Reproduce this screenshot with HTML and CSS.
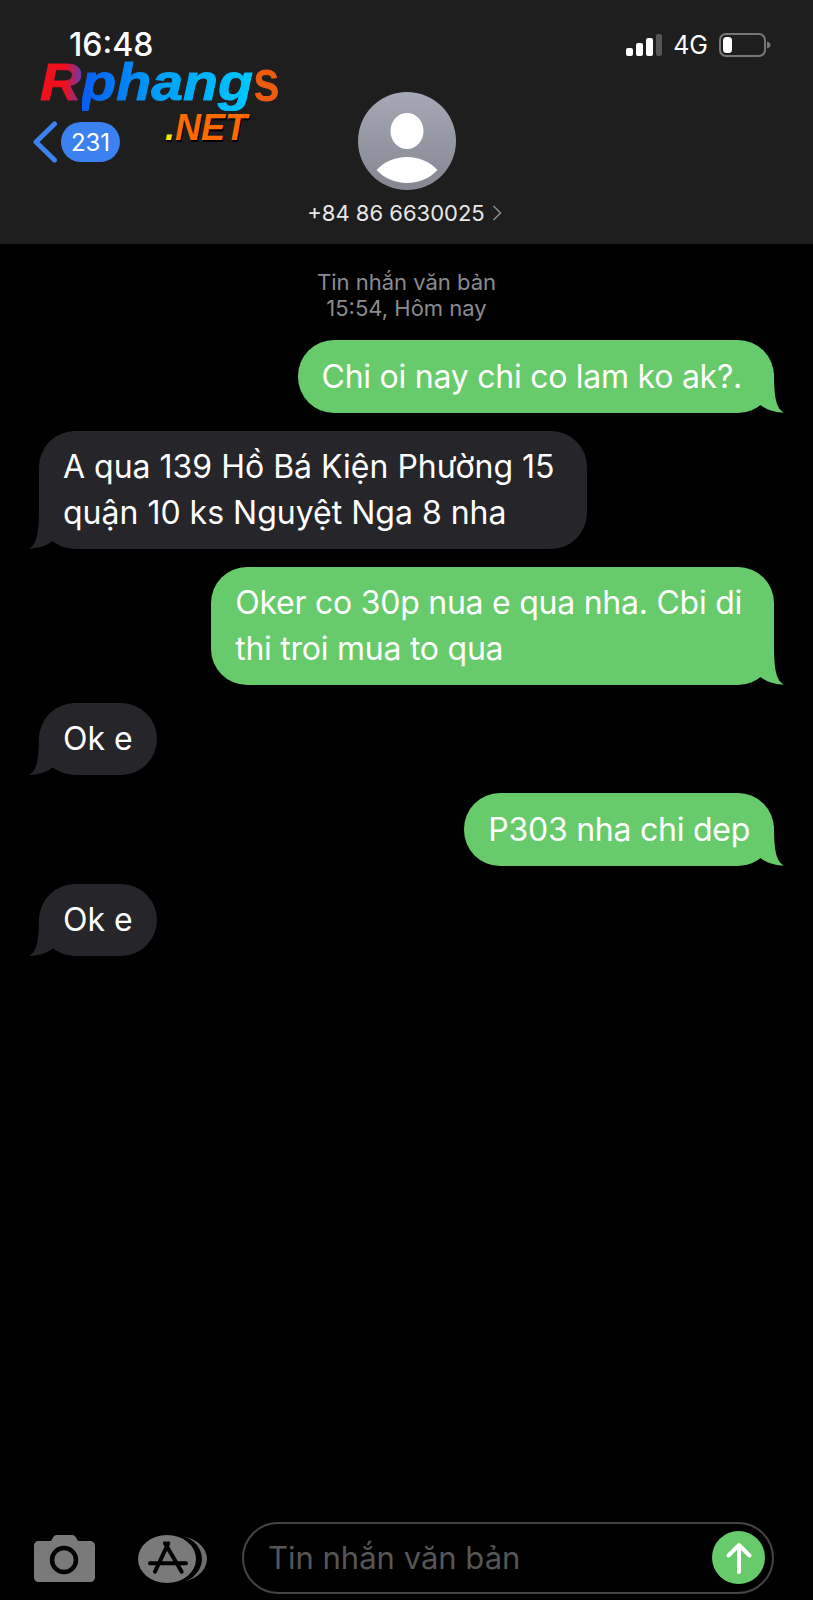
FILE: index.html
```html
<!DOCTYPE html>
<html>
<head>
    <meta charset="utf-8">
    <title>Tin nhắn</title>
    <link rel="stylesheet" href="styles.css">
</head>
<body>
<div class="phone">
    <div class="header">
        <div class="status">
            <span class="time">16:48</span>
            <div class="status-right">
                <svg class="signal" width="36" height="22" viewBox="0 0 36 22">
                    <rect x="0" y="14" width="7" height="8" rx="2" fill="#fff"/>
                    <rect x="10" y="9" width="7" height="13" rx="2" fill="#fff"/>
                    <rect x="20" y="4" width="7" height="18" rx="2" fill="#fff"/>
                    <rect x="30" y="0" width="6" height="22" rx="2" fill="#555"/>
                </svg>
                <span class="net">4G</span>
                <svg class="battery" width="52" height="24" viewBox="0 0 52 24">
                    <rect x="1" y="1" width="45" height="22" rx="6" fill="none" stroke="#777" stroke-width="2"/>
                    <rect x="4" y="4" width="9" height="16" rx="3.500" fill="#fff"/>
                    <path d="M48 8.500c2.500 .8 3.500 2 3.500 3.500s-1 2.700-3.500 3.500z" fill="#777"/>
                </svg>
            </div>
        </div>
        <div class="nav">
            <div class="back">
                <svg width="26" height="42" viewBox="0 0 26 42">
                    <path d="M21.500 3 L3 21 L21.500 39" fill="none" stroke="#3b82f0" stroke-width="5" stroke-linecap="round" stroke-linejoin="round"/>
                </svg>
                <span class="badge">231</span>
            </div>
            <div class="contact">
                <svg class="avatar" width="98" height="98" viewBox="0 0 98 98">
                    <defs>
                        <linearGradient id="avatarbg" x1="0" y1="0" x2="0" y2="1">
                            <stop offset="0" stop-color="#a6a9b5"/>
                            <stop offset="1" stop-color="#848791"/>
                        </linearGradient>
                    </defs>
                    <circle cx="49" cy="49" r="49" fill="url(#avatarbg)"/>
                    <ellipse cx="49" cy="39" rx="16.500" ry="18" fill="#fff"/>
                    <path d="M18.500 78C26 70 37 65 49 65C61 65 72 70 79.500 78C72 86 61 91 49 91C37 91 26 86 18.500 78Z" fill="#fff"/>
                </svg>
                <div class="number">+84 86 6630025 <svg width="10" height="16" viewBox="0 0 10 16"><path d="M1.500 1 L8.500 8 L1.500 15" fill="none" stroke="#888" stroke-width="1.600"/></svg></div>
            </div>
        </div>
        <div class="logo">
            <div class="logo-main"><span class="logo-r">R</span><span class="logo-p">phang</span><span class="logo-s">s</span></div>
            <div class="logo-net"><span class="logo-dot">.</span>NET</div>
        </div>
    </div>

    <div class="messages">
        <div class="stamp">Tin nhắn văn bản<br>15:54, Hôm nay</div>
        <div class="msg out wrapped tight">Chi oi nay chi co lam ko ak?.</div>
        <div class="msg in wrapped">A qua 139 Hồ Bá Kiện Phường 15<br>quận 10 ks Nguyệt Nga 8 nha</div>
        <div class="msg out wrapped tight">Oker co 30p nua e qua nha. Cbi di<br>thi troi mua to qua</div>
        <div class="msg in">Ok e</div>
        <div class="msg out tight">P303 nha chi dep</div>
        <div class="msg in">Ok e</div>
    </div>

    <div class="composer">
        <svg class="camera" width="61" height="47" viewBox="0 0 61 47">
            <path d="M5 6h12l2-3.500c1-1.700 2-2.500 4-2.500h15c2 0 3 .8 4 2.500l2 3.500h12c3 0 5 2 5 5v31c0 3-2 5-5 5H5c-3 0-5-2-5-5V11c0-3 2-5 5-5z" fill="#7a7a7a"/>
            <circle cx="30" cy="25" r="12" fill="none" stroke="#000" stroke-width="4.500"/>
        </svg>
        <svg class="appstore" width="69" height="48" viewBox="0 0 69 48">
            <ellipse cx="39" cy="24" rx="30" ry="23" fill="#6e6e6e"/>
            <ellipse cx="34" cy="24" rx="30" ry="25" fill="#000"/>
            <ellipse cx="29" cy="24" rx="29" ry="24" fill="#7a7a7a"/>
            <path d="M30.300 8.300 L17 36.700 M27 8.300 L43.700 36.700 M12 28.300 H48" fill="none" stroke="#000" stroke-width="4" stroke-linecap="round"/>
        </svg>
        <div class="input">
            <span class="placeholder">Tin nhắn văn bản</span>
            <div class="send">
                <svg width="26" height="32" viewBox="0 0 26 32">
                    <path d="M13 30 V3 M2.500 13.500 L13 3 L23.500 13.500" fill="none" stroke="#fff" stroke-width="4" stroke-linecap="round" stroke-linejoin="round"/>
                </svg>
            </div>
        </div>
    </div>
</div>
</body>
</html>
```
FILE: styles.css
```css
*{
    margin: 0;
    box-sizing: border-box;
}
body{
    background-color: black;
    font-family: Inter, "Liberation Sans", sans-serif;
}
.phone{
    position: relative;
    width: 813px;
    height: 1600px;
    display: flex;
    flex-direction: column;
    overflow: hidden;
}
.header{
    position: relative;
    height: 244px;
    background-color: #1e1e1e;
    padding: 27px 42px 0 69px;
}
.status{
    display: flex;
    justify-content: space-between;
    align-items: center;
    height: 35px;
}
.time{
    color: white;
    font-size: 32px;
    line-height: 30px;
    font-weight: 500;
}
.status-right{
    display: flex;
    align-items: center;
    gap: 11px;
}
.net{
    color: white;
    font-size: 25px;
}
.nav{
    position: relative;
    display: flex;
    justify-content: center;
    padding-top: 30px;
}
.back{
    position: absolute;
    left: -36px;
    top: 59px;
    display: flex;
    align-items: center;
    gap: 2px;
}
.badge{
    width: 59px;
    height: 40px;
    border-radius: 20px;
    background-color: #3b82f0;
    color: white;
    font-size: 24px;
    display: flex;
    align-items: center;
    justify-content: center;
}
.contact{
    display: flex;
    flex-direction: column;
    align-items: center;
    margin-left: -27px;
}
.number{
    color: #e8e8e8;
    font-size: 22px;
    margin-top: 10px;
    margin-right: 4px;
    display: flex;
    align-items: center;
    gap: 7px;
}
.logo{
    position: absolute;
    left: 40px;
    top: 60px;
    width: 245px;
    font-style: italic;
    font-weight: 900;
    font-family: "Liberation Sans", sans-serif;
}
.logo-main{
    font-size: 52px;
    line-height: 44px;
    white-space: nowrap;
    transform: scaleX(1.1);
    transform-origin: left;
    -webkit-text-stroke: 1px transparent;
}
.logo-r{
    background: linear-gradient(90deg, #f0101c 60%, #6a3ab0);
    -webkit-background-clip: text;
    background-clip: text;
    color: transparent;
}
.logo-p{
    background: linear-gradient(90deg, #0a5cf0, #00a0f8 45%, #00c8ff);
    -webkit-background-clip: text;
    background-clip: text;
    color: transparent;
}
.logo-s{
    display: inline-block;
    color: #ee5a10;
    font-style: normal;
    font-weight: 700;
    font-size: 44px;
    transform: translateY(3px) scaleY(1.35);
    transform-origin: bottom;
    -webkit-text-stroke: 0;
}
.logo-net{
    color: #ff6a00;
    font-size: 36px;
    line-height: 30px;
    margin-top: 6px;
    text-align: right;
    padding-right: 38px;
    text-shadow: 1px 2px 0 #000;
}
.logo-dot{
    color: #ffe000;
}
.messages{
    flex: 1;
    display: flex;
    flex-direction: column;
    padding: 26px 39px 0 39px;
    gap: 18px;
}
.stamp{
    color: #8b8b90;
    font-size: 22px;
    line-height: 25.500px;
    text-align: center;
    margin-bottom: 1px;
}
.msg{
    position: relative;
    padding: 13.500px 24px;
    border-radius: 36px;
    font-size: 32px;
    line-height: 45.500px;
    color: white;
    white-space: nowrap;
}
.msg::before{
    content: "";
    position: absolute;
    z-index: -1;
    bottom: 0;
    width: 40px;
    height: 40px;
    clip-path: path("M30 0C30 24 32 36 40 40C33 40 24 38 17 33L0 20L0 0Z");
}
.wrapped{
    padding-right: 32px;
}
.tight{
    letter-spacing: -0.25px;
}
.out{
    align-self: flex-end;
    background-color: #67cb6b;
}
.in{
    align-self: flex-start;
    background-color: #26252a;
}
.out::before{
    right: -10px;
    background-color: #67cb6b;
}
.in::before{
    left: -10px;
    background-color: #26252a;
    transform: scaleX(-1);
}
.composer{
    display: flex;
    align-items: center;
    padding: 0 39px 2px 34px;
    height: 83px;
}
.camera{
    margin-right: 43px;
    margin-top: 2px;
}
.appstore{
    margin-top: 2px;
    margin-right: 35px;
}
.input{
    flex: 1;
    height: 72px;
    border: 2px solid #444;
    border-radius: 36px;
    display: flex;
    align-items: center;
    justify-content: space-between;
    padding: 0 7px 0 24px;
}
.placeholder{
    color: #565656;
    font-size: 31px;
}
.send{
    width: 53px;
    height: 53px;
    border-radius: 50%;
    background-color: #67cb6b;
    display: flex;
    align-items: center;
    justify-content: center;
}
```
